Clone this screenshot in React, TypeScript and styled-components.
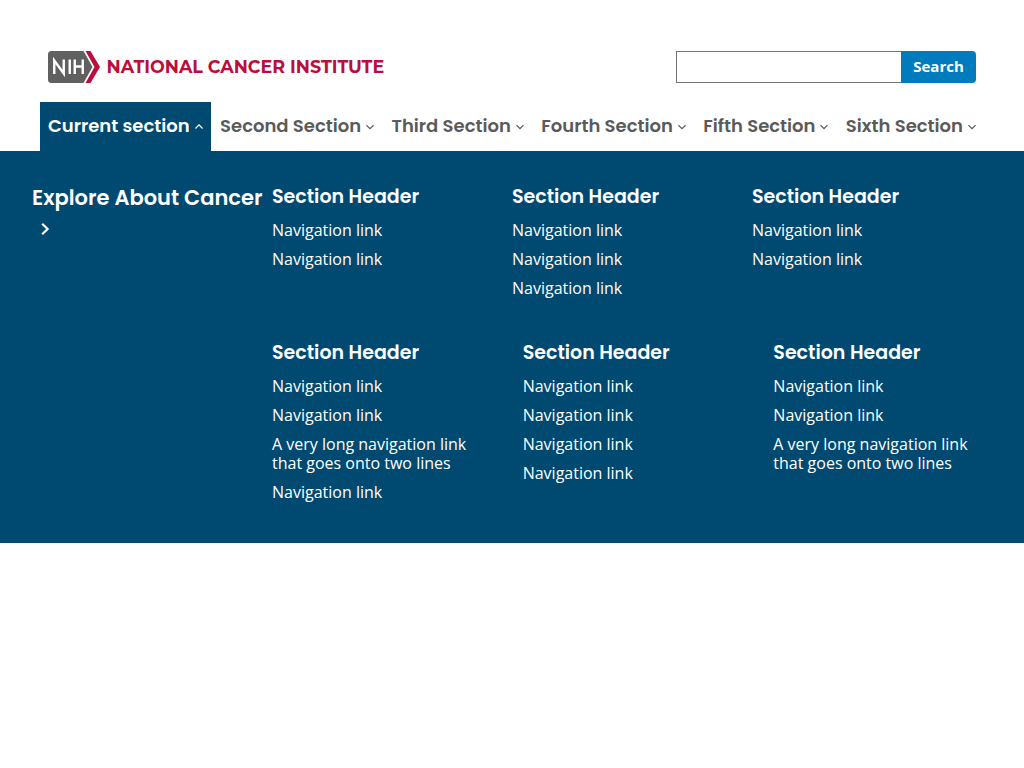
import React from "react";
import styled, { createGlobalStyle } from "styled-components";

const headingFont = `Poppins, Inter, "Open Sans", sans-serif`;
const bodyFont = `"Open Sans", "Noto Sans", sans-serif`;
const navy = "#004971";
const crimson = "#bb0e3d";

const GlobalStyle = createGlobalStyle`
  *, *::before, *::after { box-sizing: border-box; }
  body { margin: 0; background: #fff; font-family: ${bodyFont}; font-size: 16px; }
  ul { list-style: none; margin: 0; padding: 0; }
  a { text-decoration: none; color: inherit; }
`;

const Masthead = styled.div`
  display: flex;
  justify-content: space-between;
  align-items: center;
  gap: 32px;
  padding: 51px 48px 19px;
`;

const Brand = styled.a`
  svg { display: block; }
  text { font-family: Montserrat, Poppins, sans-serif; font-weight: 700; }
`;

const SearchForm = styled.form`
  display: flex;
  flex: 0 1 300px;
  height: 32px;
`;

const SearchInput = styled.input`
  flex: 1;
  min-width: 0;
  border: 1px solid #71767a;
  border-right: 0;
  border-radius: 0;
  padding: 0 8px;
  font: 16px ${bodyFont};
  background: #fff;
`;

const SearchButton = styled.button`
  width: 75px;
  border: 0;
  padding: 0 0 2px;
  border-radius: 0 4px 4px 0;
  background: #007bbd;
  color: #fff;
  font: 700 15px/30px ${bodyFont};
`;

const NavList = styled.ul`
  && { padding: 0 40px; }
  display: flex;
  justify-content: space-between;
`;

const NavButton = styled.button<{ $open?: boolean }>`
  display: flex;
  align-items: center;
  gap: 5px;
  height: 49px;
  padding: 0 8px 2px;
  border: 0;
  white-space: nowrap;
  background: ${(p) => (p.$open ? navy : "transparent")};
  color: ${(p) => (p.$open ? "#fff" : "#5a5a5a")};
  font: 600 18px/24px ${headingFont};
  svg { display: block; flex: none; }
`;

const MegaMenu = styled.div`
  display: grid;
  grid-template-columns: 240px 1fr;
  padding: 32px 32px 40px;
  background: ${navy};
  color: #fff;
`;

const Explore = styled.a`
  display: flex;
  flex-direction: column;
  font: 600 21px/30px ${headingFont};
  white-space: nowrap;
  svg { display: block; margin: 9px 0 0 8px; }
`;

const Rows = styled.div`
  display: grid;
  gap: 40px;
`;

const Row = styled.div<{ $gap: number }>`
  display: grid;
  grid-template-columns: repeat(3, 1fr);
  column-gap: ${(p) => p.$gap}px;
`;

const SectionTitle = styled.h2`
  margin: 0 0 10px;
  font: 600 19px/28px ${headingFont};
`;

const LinkList = styled.ul`
  display: grid;
  gap: 10px;
  line-height: 1.2;
`;

const Chevron = ({ up = false }: { up?: boolean }) => (
  <svg width="8" height="8" viewBox="0 0 8 8" fill="none" stroke="currentColor" strokeWidth="1.3" aria-hidden="true">
    <path d={up ? "M.4 6.5 4 2.9l3.6 3.6" : "M.4 3.1 4 6.7l3.6-3.6"} />
  </svg>
);

const sections = ["Current section", "Second Section", "Third Section", "Fourth Section", "Fifth Section", "Sixth Section"];
const link = "Navigation link";
const longLink = "A very long navigation link that goes onto two lines";
const rows = [
  { gap: 0, groups: [[link, link], [link, link, link], [link, link]] },
  { gap: 32, groups: [[link, link, longLink, link], [link, link, link, link], [link, link, longLink]] },
];

export default function App() {
  return (
    <>
      <GlobalStyle />
      <header>
        <Masthead>
          <Brand href="#" aria-label="NIH National Cancer Institute">
            <svg width="338" height="32" viewBox="0 0 676 64" aria-hidden="true">
              <path d="M7 0H71L89 32 71 64H7Q0 64 0 57V7Q0 0 7 0Z" fill="#606060" />
              <path d="M75 0H85L104 32 85 64H75L93 32Z" fill={crimson} />
              <path d="M12.5 46V19L31.5 45V17M43.5 17v29M53.5 17v29M69.5 17v29M53.5 31h16" fill="none" stroke="#fff" strokeWidth="4.8" />
              <text x="117" y="44" fontSize="35" fill={crimson}>NATIONAL CANCER INSTITUTE</text>
            </svg>
          </Brand>
          <SearchForm role="search" onSubmit={(e) => e.preventDefault()}>
            <SearchInput type="search" aria-label="Search" />
            <SearchButton type="submit">Search</SearchButton>
          </SearchForm>
        </Masthead>
        <nav aria-label="Primary navigation">
          <NavList>
            {sections.map((name, i) => (
              <li key={name}>
                <NavButton type="button" $open={i === 0} aria-expanded={i === 0}>
                  {name}
                  <Chevron up={i === 0} />
                </NavButton>
              </li>
            ))}
          </NavList>
          <MegaMenu>
            <Explore href="#">
              Explore About Cancer
              <svg width="10" height="14" viewBox="0 0 10 14" fill="none" stroke="currentColor" strokeWidth="2.2" aria-hidden="true">
                <path d="M2.2 1.7 7.6 7l-5.4 5.3" />
              </svg>
            </Explore>
            <Rows>
              {rows.map((row, r) => (
                <Row key={r} $gap={row.gap}>
                  {row.groups.map((links, g) => (
                    <section key={g}>
                      <SectionTitle>Section Header</SectionTitle>
                      <LinkList>
                        {links.map((text, i) => (
                          <li key={i}>
                            <a href="#">{text}</a>
                          </li>
                        ))}
                      </LinkList>
                    </section>
                  ))}
                </Row>
              ))}
            </Rows>
          </MegaMenu>
        </nav>
      </header>
    </>
  );
}
